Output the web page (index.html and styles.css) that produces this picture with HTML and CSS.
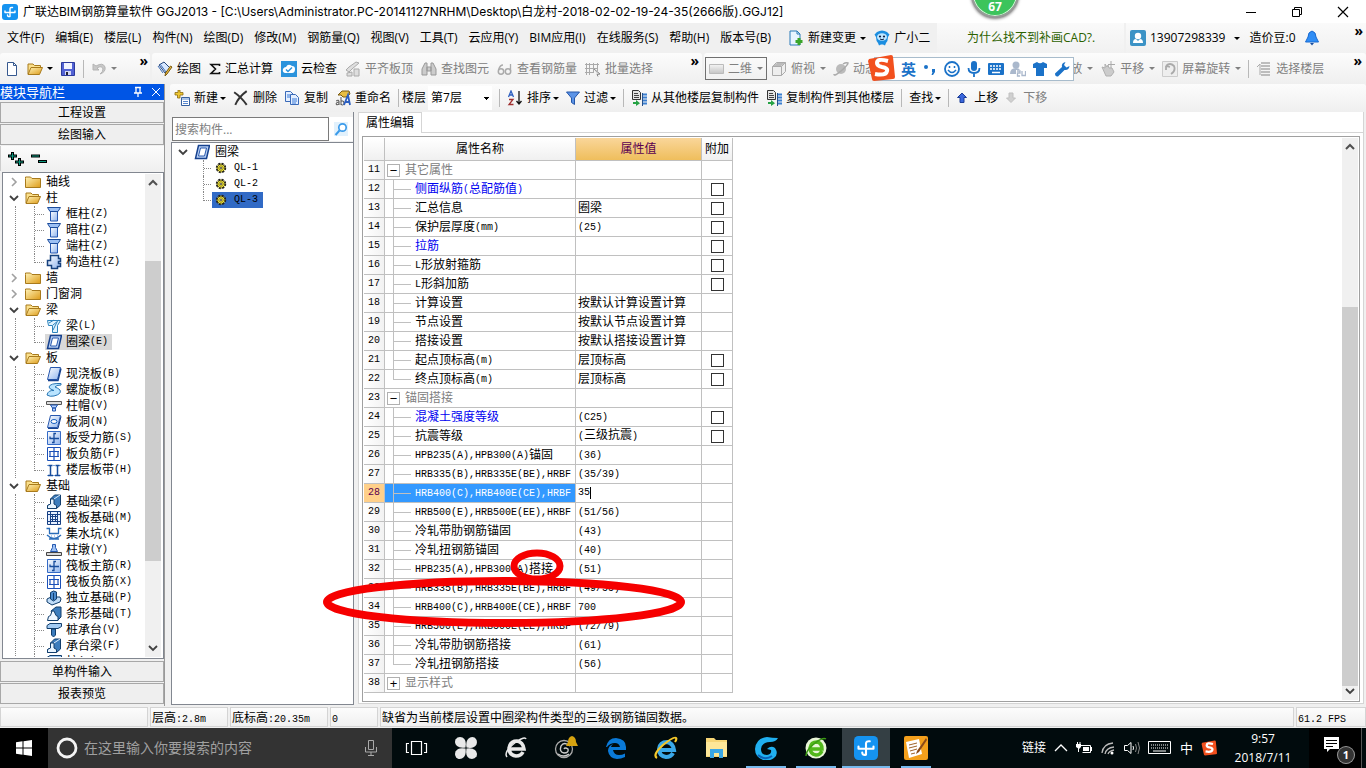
FILE: index.html
```html
<!DOCTYPE html>
<html lang="zh-CN">
<head>
<meta charset="utf-8">
<title>广联达BIM钢筋算量软件 GGJ2013</title>
<link rel="stylesheet" href="styles.css">
</head>
<body>
<svg class="sprite" aria-hidden="true">
  <defs>
    <linearGradient id="gFold" x1="0" y1="0" x2="1" y2="1"><stop offset="0" stop-color="#fff3b8"/><stop offset="1" stop-color="#dd9b18"/></linearGradient>
    <linearGradient id="gBlue" x1="0" y1="0" x2="1" y2="1"><stop offset="0" stop-color="#fff"/><stop offset="1" stop-color="#8fb4ee"/></linearGradient>
    <linearGradient id="gGray" x1="0" y1="0" x2="0" y2="1"><stop offset="0" stop-color="#f4f4f4"/><stop offset="1" stop-color="#c4c4c4"/></linearGradient>
  </defs>
  <symbol id="app" viewBox="0 0 16 16"><rect width="16" height="16" rx="3" fill="#1593f0"/><path d="M8 12.500V5Q8 3.200 10.500 3.500M3 8.500h10M3 7v1.500M13 7v1.500M8 12.500q-2.500.5-2.500-1.500" fill="none" stroke="#fff" stroke-width="1.400" stroke-linecap="round"/></symbol>
  <symbol id="folder" viewBox="0 0 16 16"><path d="M.5 4.500V3h5l1.500 1.500h8.500v9H.5z" fill="url(#gFold)" stroke="#a87a1c"/></symbol>
  <symbol id="folderopen" viewBox="0 0 16 16"><path d="M1 13V3h5l1.500 1.500h6V7" fill="#fbe08c" stroke="#a87a1c"/><path d="M1 13.500L4 6.500h11.500l-3 7z" fill="url(#gFold)" stroke="#a87a1c"/></symbol>
  <symbol id="down" viewBox="0 0 10 10"><path d="M1 3l4 4 4-4" fill="none" stroke="#404040" stroke-width="1.800"/></symbol>
  <symbol id="right" viewBox="0 0 10 10"><path d="M3 1l4 4-4 4" fill="none" stroke="#a0a0a0" stroke-width="1.600"/></symbol>
  <symbol id="up" viewBox="0 0 10 10"><path d="M1 7l4-4 4 4" fill="none" stroke="#505050" stroke-width="2"/></symbol>
  <symbol id="column" viewBox="0 0 16 16"><path d="M4.500 5h7v10h-7z" fill="url(#gBlue)" stroke="#2456b0"/><path d="M1.500 1.500h13l-2.500 4H4z" fill="#9cc0f4" stroke="#1c4c9c"/></symbol>
  <symbol id="gzz" viewBox="0 0 16 16"><path d="M4.500 1.500h8v3h2v3h-2v2h2v3h-3v2h-6v-3h-4v-5h3z" fill="url(#gBlue)" stroke="#16417e" stroke-width="1.500"/></symbol>
  <symbol id="beam" viewBox="0 0 16 16"><path d="M1.500 2.500h13l-3 5v7h-5v-7h-4z" fill="#dff4ff" stroke="#2d83bc"/><path d="M3 5l5-3M7 7l6-5M7 12l4-8" stroke="#2d83bc"/></symbol>
  <symbol id="ring" viewBox="0 0 16 16"><path d="M4.500 1.500h11l-3 13h-11z" fill="#b8d0f4" stroke="#16418e" stroke-width="1.500"/><path d="M6.500 4h6l-2 8h-6z" fill="#fff" stroke="#2858ae"/></symbol>
  <symbol id="slab" viewBox="0 0 16 16"><path d="M4.500 1.500h10l-3 12h-10z" fill="url(#gBlue)" stroke="#2858ae"/><path d="M2 14.500h10l3-12" fill="none" stroke="#16418e" stroke-width="1.400"/></symbol>
  <symbol id="spiral" viewBox="0 0 16 16"><path d="M15 1.500Q4 1 3 5q0 2 5 3.500-6-.5-7 4.500 3 2 7 1 8-2 6-6Q12 6 9 5q1-2 6-2z" fill="#b9e4ff" stroke="#2876b4"/></symbol>
  <symbol id="cap" viewBox="0 0 16 16"><path d="M.5 3.500h15v3H.5z" fill="#ddd" stroke="#555"/><path d="M4.500 7h7L9.500 10H6.500zM6.500 10h3v3h-3z" fill="#b4d0ff" stroke="#2458b0"/></symbol>
  <symbol id="hole" viewBox="0 0 16 16"><path d="M4.500 1.500h10l-3 12h-10z" fill="url(#gBlue)" stroke="#2858ae"/><ellipse cx="8" cy="7.500" rx="3" ry="2" fill="#fff" stroke="#1760c0"/><path d="M2 14.500h10l3-12" fill="none" stroke="#16418e"/></symbol>
  <symbol id="rebar1" viewBox="0 0 16 16"><path d="M1.500 1.500h13v13h-13z" fill="url(#gBlue)" stroke="#356bc6"/><path d="M10 3.500H8v9H6M4 6.500v2h9" fill="none" stroke="#174c9c" stroke-width="1.300"/></symbol>
  <symbol id="rebar2" viewBox="0 0 16 16"><path d="M1.500 1.500h13v13h-13z" fill="#fff" stroke="#1b50b8"/><path d="M8 2v12M3 5.500h10M3 10.500h10M4 5v6M12 5v6" stroke="#1b50b8" stroke-width="1.200"/></symbol>
  <symbol id="band" viewBox="0 0 16 16"><path d="M1 3.500h14M1 13.500h14" stroke="#7aa4dc" stroke-dasharray="2 1"/><path d="M4.500 3v11M11.500 3v11M2.500 3.500h4M9.500 3.500h4M2 13.500h5M9 13.500h5" stroke="#174c9c" stroke-width="1.500"/></symbol>
  <symbol id="found" viewBox="0 0 16 16"><path d="M1.500 14.500v-3l3-1.500V5l4-4h6v10l-4 3.500z" fill="#3c7cbc" stroke="#123e6c"/><path d="M1.500 11.500l3-1.500V5H8v5l2.500 1.500v3h-9z" fill="#e8f4ff" stroke="#123e6c"/><path d="M8 5l6-4" stroke="#e0f0ff"/></symbol>
  <symbol id="raft" viewBox="0 0 16 16"><path d="M1.500 1.500h13v13h-13z" fill="#e6f0ff" stroke="#174084"/><path d="M4.500 2v12M11.500 2v12M2 4.500h12M2 11.500h12M6.500 5v6M9.500 5v6M5 6.500h6M5 9.500h6" stroke="#174084"/></symbol>
  <symbol id="pit" viewBox="0 0 16 16"><path d="M.5 2.500h3v5h9v-5h3M1 9q7 7 14 0M3 13h10" fill="none" stroke="#2a6cb8" stroke-width="1.300"/><path d="M2 10h12M5 13.500h6" stroke="#6098e0" stroke-dasharray="1 2"/></symbol>
  <symbol id="pier" viewBox="0 0 16 16"><path d="M.5 10.500h15v3H.5z" fill="#d8d8d8" stroke="#444"/><path d="M6.500 2.500h3v3l2 4h-7l2-4z" fill="#9cc0f4" stroke="#2458b0"/></symbol>
  <symbol id="iso" viewBox="0 0 16 16"><path d="M1 9l4-2 9 0 1 2-1 3-8 3-5-3z" fill="#bfdcf8" stroke="#123e6c"/><path d="M4.500 2.500l3-1.500 3 1v7l-3 2-3-2zM7.500 3v7" fill="#4c8cd0" stroke="#123e6c"/></symbol>
  <symbol id="strip" viewBox="0 0 16 16"><path d="M10 14.500L5 5l5-4h5v10l-3 3z" fill="#3c7cbc" stroke="#123e6c"/><path d="M1.500 14.500l1-4 2-1L6 5h2l2 4.500 2 1v4z" fill="#eef6ff" stroke="#123e6c"/></symbol>
  <symbol id="pile" viewBox="0 0 16 16"><path d="M1 3.500L4 1.500h11.500v3L12 6.500H1z" fill="#a4ccf4" stroke="#123e6c"/><path d="M5.500 7h4v6l-2 2-2-2z" fill="#3c7cbc" stroke="#123e6c"/></symbol>
  <symbol id="gear" viewBox="0 0 12 12"><circle cx="6" cy="6" r="4.300" fill="#f4e83a" stroke="#222" stroke-width="1.800" stroke-dasharray="2 1.400"/><path d="M6 1v10M1 6h10M2.500 2.500l7 7M9.500 2.500l-7 7" stroke="#4a4410" stroke-width=".7"/><circle cx="6" cy="6" r="2" fill="#f4e83a"/><circle cx="6" cy="6" r="1" fill="#fff" stroke="#222" stroke-width=".8"/></symbol>
  <symbol id="sogou" viewBox="0 0 28 28"><path d="M2 5L24 1q2 0 2 2l2 20q0 2-2 2L7 27q-2 0-2-2L1 7z" fill="#f2501e"/><path d="M21 7q-11-3-11 2 0 3 5 4 6 1 5 4-1 5-12 3" fill="none" stroke="#fff" stroke-width="4"/></symbol>
  <symbol id="copyto" viewBox="0 0 16 16"><path d="M1.500.5h6l2 2v7h-8z" fill="#e4e4e4" stroke="#333"/><path d="M3 3.500h4M3 5.500h5M3 7.500h5" stroke="#444"/><path d="M11 4.500h5M11 7.500h5M11 10.500h5M11 13.500h5" stroke="#3b7fd0" stroke-width="2"/><path d="M11.500 3v13" stroke="#24508c"/><path d="M2 12h3v-2l4 3.200L5 16v-2H2z" fill="#25a244"/></symbol>
</svg>

<header class="titlebar">
  <svg class="i16"><use href="#app"/></svg>
  <h1>广联达BIM钢筋算量软件 GGJ2013 - [C:\Users\Administrator.PC-20141127NRHM\Desktop\白龙村-2018-02-02-19-24-35(2666版).GGJ12]</h1>
  <div class="winbtns">
    <button aria-label="最小化"><svg class="i12" viewBox="0 0 12 12"><path d="M1 6.500h10" stroke="#000"/></svg></button>
    <button aria-label="还原"><svg class="i12" viewBox="0 0 12 12"><path d="M1.500 3.500h7v7h-7zM3.500 3V1.500h7v7H9" fill="none" stroke="#000"/></svg></button>
    <button aria-label="关闭"><svg class="i12" viewBox="0 0 12 12"><path d="M1 1l10 10M11 1L1 11" stroke="#000" stroke-width="1.200"/></svg></button>
  </div>
  <div class="ball">67</div>
</header>

<nav class="menubar">
  <div class="menus">
    <button>文件(F)</button><button>编辑(E)</button><button>楼层(L)</button><button>构件(N)</button><button>绘图(D)</button><button>修改(M)</button><button>钢筋量(Q)</button><button>视图(V)</button><button>工具(T)</button><button>云应用(Y)</button><button>BIM应用(I)</button><button>在线服务(S)</button><button>帮助(H)</button><button>版本号(B)</button>
    <button class="drop change"><svg class="i16" viewBox="0 0 16 16"><path d="M2 1h7l3 3v11H2z" fill="#e8f4ff" stroke="#2a7ab8"/><path d="M9 1v3h3" fill="none" stroke="#2a7ab8"/><path d="M11 8v7M7.500 11.500h7" stroke="#3aa52a" stroke-width="3"/></svg>新建变更</button>
    <button><svg class="i16" viewBox="0 0 16 16"><path d="M3 2q5-3 10 0l2.500 2.500L14 7q0 4-2 6l-1 2.500-2-1H7l-2 1L4 13Q2 11 2 7L.5 4.500z" fill="#1c8ee0"/><ellipse cx="8" cy="7" rx="5" ry="3.800" fill="#bfe6ff"/><circle cx="6" cy="6.500" r="1.100" fill="#124"/><circle cx="10" cy="6.500" r="1.100" fill="#124"/><path d="M6 9q2 1.500 4 0" fill="none" stroke="#124"/></svg>广小二</button>
  </div>
  <a class="tip" href="#">为什么找不到补画CAD?.</a>
  <div class="account">
    <button class="drop"><svg class="i16" viewBox="0 0 16 16"><rect width="16" height="16" rx="2" fill="#3c93c6"/><circle cx="8" cy="6" r="3.200" fill="#fff"/><path d="M3 13q0-4 3-4l2 2 2-2q3 0 3 4z" fill="#fff"/></svg>13907298339</button>
    <button class="bell">造价豆:0<svg class="i16" viewBox="0 0 16 16"><path d="M8 1q4 1 4 6l2.500 5h-13L4 7q0-5 4-6z" fill="#2f8df5" stroke="#1a6ad0"/><path d="M6 13h4l-2 2.500z" fill="#1a4fa0"/></svg></button>
    <span class="more">»</span>
  </div>
</nav>

<div class="toolrow">
  <div class="bar file">
    <button aria-label="新建工程"><svg class="i16" viewBox="0 0 16 16"><path d="M3.500 1.500h6l3 3v10h-9z" fill="#fff" stroke="#37598f"/><path d="M9.500 1.500v3h3" fill="none" stroke="#37598f"/></svg></button>
    <button class="drop" aria-label="打开"><svg class="i16"><use href="#folderopen"/></svg></button>
    <button aria-label="保存"><svg class="i16" viewBox="0 0 16 16"><path d="M1.500 1.500h13v13h-13z" fill="#5262d4" stroke="#2c3a9c"/><path d="M4 2h8v6H4z" fill="#f2f4ff"/><path d="M5 10h6v4H5z" fill="#d4d8f4"/><path d="M6 11h2v3H6z" fill="#223"/></svg></button>
    <i class="sep"></i>
    <button class="drop off" aria-label="撤销"><svg class="i16" viewBox="0 0 16 16"><path d="M2 3v6h6L6 7q5-3 6 1 0 3-3 5 6-2 5-7-2-5-9-1z" fill="#c8c8c8" stroke="#b4b4b4"/></svg></button>
    <span class="more">»</span>
  </div>
  <div class="bar edit">
    <button><svg class="i16" viewBox="0 0 16 16"><path d="M2 4l5-3 6 6-5 5z" fill="#d8e8ff" stroke="#26477c"/><path d="M1 5l5 7M3 3l6 8" stroke="#3d6db8"/><path d="M15 6l-5 7-2 2 .5-3 5-7z" fill="#e8b93e" stroke="#7a5a10"/></svg>绘图</button>
    <button><svg class="i12" viewBox="0 0 12 12"><path d="M10.500 3V1.500H2L6.500 6 2 10.500h8.500V9" fill="none" stroke="#111" stroke-width="1.600"/></svg>汇总计算</button>
    <button><svg class="i16" viewBox="0 0 16 16"><rect width="16" height="16" fill="#2b93dc"/><path d="M4 12q-3-1-2-4 1-2 3-2 2-4 6-1 3 0 3 3 0 4-3 4z" fill="#fff"/><path d="M5 8.500l2 2 4-4" fill="none" stroke="#2b93dc" stroke-width="1.500"/></svg>云检查</button>
    <button class="off"><svg class="i16" viewBox="0 0 16 16"><path d="M1 9l3-3 7-5 3 1-7 6-3 3zM2 15v-3l5-1v4zM9 15V8h5v7z" fill="#dedede" stroke="#aaa"/></svg>平齐板顶</button>
    <button class="off"><svg class="i16" viewBox="0 0 16 16"><path d="M1 14V8l3-6h2v12zM10 14V2h2l3 6v6zM6 6h4v4H6z" fill="#ccc" stroke="#999"/></svg>查找图元</button>
    <button class="off"><svg class="i16" viewBox="0 0 16 16"><circle cx="4" cy="10.500" r="2.700" fill="none" stroke="#aaa" stroke-width="1.500"/><circle cx="11" cy="10.500" r="2.700" fill="none" stroke="#aaa" stroke-width="1.500"/><path d="M1.500 9Q3 4 6 4M13.500 10V3" fill="none" stroke="#aaa" stroke-width="1.300"/></svg>查看钢筋量</button>
    <button class="off"><svg class="i16" viewBox="0 0 16 16"><path d="M1.500 2v12M4.500 2v12M8.500 2v10M12.500 2v8M0 3.500h14M0 7.500h13M0 11.500h8" stroke="#aaa"/><path d="M9 8l6 5-3 .5 1 2" fill="#ddd" stroke="#888"/></svg>批量选择</button>
    <span class="more">»</span>
  </div>
  <div class="bar view">
    <button class="drop off boxed"><svg class="i16" viewBox="0 0 16 16"><path d="M1.500 3.500h14v9h-14z" fill="url(#gGray)" stroke="#bbb"/></svg>二维</button>
    <button class="drop off"><svg class="i16" viewBox="0 0 16 16"><path d="M1.500 5.500l4-4h9v9l-4 4h-9z" fill="#eee" stroke="#aaa"/><path d="M1.500 5.500h9v9M10.500 5.500l4-4" fill="none" stroke="#aaa"/><path d="M2 5l4-3h8l-4 3z" fill="#bbb"/></svg>俯视</button>
    <button class="off"><svg class="i16" viewBox="0 0 16 16"><circle cx="8" cy="8" r="5" fill="#bbb"/><path d="M1 13q0 3 7-3t7-8q-2-1-5 1" fill="none" stroke="#aaa" stroke-width="1.500"/></svg>动态</button>
    <button class="drop off push">缩放</button>
    <button class="drop off"><svg class="i16" viewBox="0 0 16 16"><path d="M2 6l3 1V3l2 3 1-2 1 3h3l2 4-3 4H6z" fill="#ccc" stroke="#b0b0b0"/><path d="M11 0v7M8 3.500h7" stroke="#aaa"/></svg>平移</button>
    <button class="drop off"><svg class="i16" viewBox="0 0 16 16"><path d="M.5.500h15v15H.5z" fill="#eee" stroke="#ccc"/><path d="M4 5q4-4 8 0 2 5-3 8M4 5v4M4 5l4 1" fill="none" stroke="#aaa" stroke-width="1.800"/></svg>屏幕旋转</button>
    <i class="sep"></i>
    <button class="off"><svg class="i16" viewBox="0 0 16 16"><path d="M5 2h9M5 5h9M5 8h9M5 11h9M5 14h9" stroke="#aaa" stroke-width="1.500"/><path d="M1 6l3-3v11" fill="none" stroke="#aaa"/></svg>选择楼层</button>
    <span class="more">»</span>
  </div>
  <div class="ime">
    <svg class="imelogo"><use href="#sogou"/></svg>
    <b>英</b>
    <svg class="i16" viewBox="0 0 16 16"><circle cx="4" cy="6" r="2" fill="#1b72c8"/><path d="M10 8h3v3l-2 3h-1.500l1-3H10z" fill="#1b72c8"/></svg>
    <svg class="i16" viewBox="0 0 16 16"><circle cx="8" cy="8" r="7" fill="none" stroke="#1b72c8" stroke-width="1.800"/><path d="M5.500 5v2M10.500 5v2M4 9q4 5 8 0" fill="none" stroke="#1b72c8" stroke-width="1.500"/></svg>
    <svg class="i16" viewBox="0 0 16 16"><rect x="5" y="0" width="6" height="10" rx="3" fill="#1b72c8"/><path d="M2.500 7q0 5 5.500 5t5.500-5M8 12v4" fill="none" stroke="#1b72c8" stroke-width="1.800"/></svg>
    <svg class="i16" viewBox="0 0 16 16"><rect x="0" y="2" width="16" height="12" rx="1" fill="#1b72c8"/><path d="M2 5h12M2 8h12" stroke="#fff" stroke-width="1.500" stroke-dasharray="2 1"/><path d="M4 11.500h8" stroke="#fff" stroke-width="1.500"/></svg>
    <svg class="i16" viewBox="0 0 16 16"><circle cx="6" cy="4" r="3.500" fill="#aab8cc"/><path d="M0 13q0-6 6-6 3 0 4 2H6v4z" fill="#aab8cc"/><path d="M7 10h3v2H7.500v3H10M12 10v4.500h3.500V10" fill="none" stroke="#aab8cc" stroke-width="1.300"/></svg>
    <svg class="i16" viewBox="0 0 16 16"><path d="M1 3l4-2q3 2.500 6 0l4 2v4h-3v8H4V7H1z" fill="#1b72c8"/></svg>
    <svg class="i16" viewBox="0 0 16 16"><path d="M1 12.500L8 6Q7 2 11.500 1L10 4l2.500 2.500L15.500 5Q15 9.500 10.500 9L4 15.500Q1 16 1 12.500z" fill="#1b72c8"/></svg>
  </div>
</div>

<main class="work">
  <aside class="side">
    <div class="sidehead"><span>模块导航栏</span>
      <svg class="i12" viewBox="0 0 12 12"><path d="M3 1.500h6M4 1v6M8 1v6M2 7h8M6 7v4" stroke="#fff" stroke-width="1.300"/></svg>
      <svg class="i12" viewBox="0 0 12 12"><path d="M2 2l8 8M10 2l-8 8" stroke="#fff"/></svg>
    </div>
    <button class="wide">工程设置</button>
    <button class="wide">绘图输入</button>
    <div class="sidetools">
      <svg class="i16" viewBox="0 0 16 16"><path d="M0 5h9M4.500 1v8M7 11h9M11.500 7v8" stroke="#000" stroke-width="3"/><path d="M1 5h7M4.500 2v6M8 11h7M11.500 8v6" stroke="#0b9a80"/></svg>
      <svg class="i16" viewBox="0 0 16 16"><path d="M0 5h9M7 10.500h9" stroke="#000" stroke-width="3"/><path d="M1 5h7M8 10.500h7" stroke="#0b9a80"/></svg>
    </div>
    <div class="treebox">
      <ul class="tree">
        <li><div class="row"><svg class="chev"><use href="#right"/></svg><svg class="i16"><use href="#folder"/></svg>轴线</div></li>
        <li><div class="row"><svg class="chev"><use href="#down"/></svg><svg class="i16"><use href="#folderopen"/></svg>柱</div>
          <ul>
            <li><span><svg class="i16"><use href="#column"/></svg>框柱<b>(Z)</b></span></li>
            <li><span><svg class="i16"><use href="#column"/></svg>暗柱<b>(Z)</b></span></li>
            <li><span><svg class="i16"><use href="#column"/></svg>端柱<b>(Z)</b></span></li>
            <li><span><svg class="i16"><use href="#gzz"/></svg>构造柱<b>(Z)</b></span></li>
          </ul></li>
        <li><div class="row"><svg class="chev"><use href="#right"/></svg><svg class="i16"><use href="#folder"/></svg>墙</div></li>
        <li><div class="row"><svg class="chev"><use href="#right"/></svg><svg class="i16"><use href="#folder"/></svg>门窗洞</div></li>
        <li><div class="row"><svg class="chev"><use href="#down"/></svg><svg class="i16"><use href="#folderopen"/></svg>梁</div>
          <ul>
            <li><span><svg class="i16"><use href="#beam"/></svg>梁<b>(L)</b></span></li>
            <li><span class="cur"><svg class="i16"><use href="#ring"/></svg>圈梁<b>(E)</b></span></li>
          </ul></li>
        <li><div class="row"><svg class="chev"><use href="#down"/></svg><svg class="i16"><use href="#folderopen"/></svg>板</div>
          <ul>
            <li><span><svg class="i16"><use href="#slab"/></svg>现浇板<b>(B)</b></span></li>
            <li><span><svg class="i16"><use href="#spiral"/></svg>螺旋板<b>(B)</b></span></li>
            <li><span><svg class="i16"><use href="#cap"/></svg>柱帽<b>(V)</b></span></li>
            <li><span><svg class="i16"><use href="#hole"/></svg>板洞<b>(N)</b></span></li>
            <li><span><svg class="i16"><use href="#rebar1"/></svg>板受力筋<b>(S)</b></span></li>
            <li><span><svg class="i16"><use href="#rebar2"/></svg>板负筋<b>(F)</b></span></li>
            <li><span><svg class="i16"><use href="#band"/></svg>楼层板带<b>(H)</b></span></li>
          </ul></li>
        <li><div class="row"><svg class="chev"><use href="#down"/></svg><svg class="i16"><use href="#folderopen"/></svg>基础</div>
          <ul>
            <li><span><svg class="i16"><use href="#found"/></svg>基础梁<b>(F)</b></span></li>
            <li><span><svg class="i16"><use href="#raft"/></svg>筏板基础<b>(M)</b></span></li>
            <li><span><svg class="i16"><use href="#pit"/></svg>集水坑<b>(K)</b></span></li>
            <li><span><svg class="i16"><use href="#pier"/></svg>柱墩<b>(Y)</b></span></li>
            <li><span><svg class="i16"><use href="#rebar1"/></svg>筏板主筋<b>(R)</b></span></li>
            <li><span><svg class="i16"><use href="#rebar2"/></svg>筏板负筋<b>(X)</b></span></li>
            <li><span><svg class="i16"><use href="#iso"/></svg>独立基础<b>(P)</b></span></li>
            <li><span><svg class="i16"><use href="#strip"/></svg>条形基础<b>(T)</b></span></li>
            <li><span><svg class="i16"><use href="#pile"/></svg>桩承台<b>(V)</b></span></li>
            <li><span><svg class="i16"><use href="#found"/></svg>承台梁<b>(F)</b></span></li>
            <li><span><svg class="i16"><use href="#pile"/></svg>桩<b>(U)</b></span></li>
          </ul></li>
      </ul>
      <div class="scroll"><svg class="chev"><use href="#up"/></svg><i class="before"></i><i class="thumb"></i><i class="after"></i><svg class="chev"><use href="#down"/></svg></div>
    </div>
    <button class="wide">单构件输入</button>
    <button class="wide">报表预览</button>
  </aside>

  <section class="right">
    <div class="bar parts">
      <button class="drop"><svg class="i16" viewBox="0 0 16 16"><path d="M4 0h2v2.500h3v2.500H6v3H3.500V5H1V2.500h3z" fill="#f0c832" stroke="#8a6a10" stroke-width=".8"/><path d="M7.500 7.500h8v8h-8z" fill="#fff" stroke="#36609e"/><path d="M8 9h7M9 11.500h5M9 13.500h5" stroke="#5888d0"/></svg>新建</button>
      <button><svg class="i16" viewBox="0 0 14 14"><path d="M1 2q6 4 11 11M12 1Q5 6 2 13" fill="none" stroke="#333" stroke-width="1.700"/></svg>删除</button>
      <button><svg class="i16" viewBox="0 0 16 16"><path d="M1.500 1.500h5l3 3v7h-8z" fill="#e4efff" stroke="#3a6ab8"/><path d="M6.500 4.500h5l3 3v7h-8z" fill="#e4efff" stroke="#3a6ab8"/><path d="M3 5h3M3 7h3M8 9h5M8 11h5M8 13h4" stroke="#3a7ad8"/></svg>复制</button>
      <button><svg class="i16" viewBox="0 0 16 16"><path d="M3 5l4-4h7l1 3-4 3H8L6 5z" fill="#e8bd42" stroke="#7a5a10"/><path d="M1 11q3-2 3 0v4M4 12q-3 0-3 2t3 0M6 7v8M6 11q3-1 3 2t-3 1.500" fill="none" stroke="#555"/><path d="M9 15l4-10 2 10M10.500 12H15" fill="none" stroke="#2c5fc0" stroke-width="1.800"/></svg>重命名</button>
      <i class="sep"></i>
      <label>楼层 <select><option>第7层</option></select></label>
      <i class="sep"></i>
      <button class="drop"><svg class="i16" viewBox="0 0 16 16"><path d="M1.500 7L4 1l2.500 6M2.500 5h3" fill="none" stroke="#2c5fc0" stroke-width="1.300"/><path d="M2 9.500h4l-4 5h4.500" fill="none" stroke="#a03030" stroke-width="1.300"/><path d="M12 1v13M9.500 11l2.500 3 2.500-3" fill="none" stroke="#111" stroke-width="1.300"/></svg>排序</button>
      <button class="drop"><svg class="i14" viewBox="0 0 14 14"><path d="M.5 1h13L8.500 7v6.500l-3-2V7z" fill="#5b93e6" stroke="#2456a8"/></svg>过滤</button>
      <i class="sep"></i>
      <button><svg class="i16"><use href="#copyto"/></svg>从其他楼层复制构件</button>
      <button><svg class="i16"><use href="#copyto"/></svg>复制构件到其他楼层</button>
      <i class="sep"></i>
      <button class="drop">查找</button>
      <i class="sep"></i>
      <button class="arrow"><svg class="i12" viewBox="0 0 12 12"><path d="M6 1l4.500 4.500H8v5H4v-5H1.500z" fill="#3a66dc" stroke="#1b3c96"/></svg>上移</button>
      <button class="arrow off"><svg class="i12" viewBox="0 0 12 12"><path d="M6 10.500L1.500 6H4V1h4v5h2.500z" fill="#d0d0d0" stroke="#c0c0c0"/></svg>下移</button>
    </div>
    <div class="panes">
      <section class="comp">
        <div class="search"><input type="text" placeholder="搜索构件..." aria-label="搜索构件"><button aria-label="搜索"><svg class="i14" viewBox="0 0 14 14"><rect width="14" height="14" fill="#e2f1fc"/><circle cx="8.500" cy="5.500" r="3.700" fill="#fff" stroke="#3b9bea" stroke-width="1.700"/><path d="M5.500 8.500L1.500 13" stroke="#3b9bea" stroke-width="2"/></svg></button></div>
        <div class="complist">
          <ul class="tree">
            <li><div class="row"><svg class="chev"><use href="#down"/></svg><svg class="i16"><use href="#ring"/></svg>圈梁</div>
              <ul>
                <li><span><svg class="i12"><use href="#gear"/></svg><b>QL-1</b></span></li>
                <li><span><svg class="i12"><use href="#gear"/></svg><b>QL-2</b></span></li>
                <li><span class="sel"><svg class="i12"><use href="#gear"/></svg><b>QL-3</b></span></li>
              </ul></li>
          </ul>
        </div>
      </section>
      <section class="props">
        <div class="tabs"><button class="tab">属性编辑</button><i></i></div>
        <div class="gridbox">
          <div class="gridarea">
          <table>
            <colgroup><col class="c1"><col class="c2"><col class="c3"><col class="c4"></colgroup>
            <thead><tr><th></th><th>属性名称</th><th class="hot">属性值</th><th>附加</th></tr></thead>
            <tbody>
              <tr class="grp"><th>11</th><td><button>−</button>其它属性</td><td></td><td></td></tr>
              <tr class="blue"><th>12</th><td><div>侧面纵筋<b>(</b>总配筋值<b>)</b></div></td><td></td><td><input type="checkbox" aria-label="附加 侧面纵筋"></td></tr>
              <tr><th>13</th><td><div>汇总信息</div></td><td>圈梁</td><td><input type="checkbox" aria-label="附加 汇总信息"></td></tr>
              <tr><th>14</th><td><div>保护层厚度<b>(mm)</b></div></td><td><b>(25)</b></td><td><input type="checkbox" aria-label="附加 保护层厚度"></td></tr>
              <tr class="blue"><th>15</th><td><div>拉筋</div></td><td></td><td><input type="checkbox" aria-label="附加 拉筋"></td></tr>
              <tr><th>16</th><td><div><b>L</b>形放射箍筋</div></td><td></td><td><input type="checkbox" aria-label="附加 L形放射箍筋"></td></tr>
              <tr><th>17</th><td><div><b>L</b>形斜加筋</div></td><td></td><td><input type="checkbox" aria-label="附加 L形斜加筋"></td></tr>
              <tr><th>18</th><td><div>计算设置</div></td><td>按默认计算设置计算</td><td></td></tr>
              <tr><th>19</th><td><div>节点设置</div></td><td>按默认节点设置计算</td><td></td></tr>
              <tr><th>20</th><td><div>搭接设置</div></td><td>按默认搭接设置计算</td><td></td></tr>
              <tr><th>21</th><td><div>起点顶标高<b>(m)</b></div></td><td>层顶标高</td><td><input type="checkbox" aria-label="附加 起点顶标高"></td></tr>
              <tr class="end"><th>22</th><td><div>终点顶标高<b>(m)</b></div></td><td>层顶标高</td><td><input type="checkbox" aria-label="附加 终点顶标高"></td></tr>
              <tr class="grp"><th>23</th><td><button>−</button>锚固搭接</td><td></td><td></td></tr>
              <tr class="blue"><th>24</th><td><div>混凝土强度等级</div></td><td><b>(C25)</b></td><td><input type="checkbox" aria-label="附加 混凝土强度等级"></td></tr>
              <tr><th>25</th><td><div>抗震等级</div></td><td><b>(</b>三级抗震<b>)</b></td><td><input type="checkbox" aria-label="附加 抗震等级"></td></tr>
              <tr><th>26</th><td><div><b>HPB235(A),HPB300(A)</b>锚固</div></td><td><b>(36)</b></td><td></td></tr>
              <tr><th>27</th><td><div><b>HRB335(B),HRB335E(BE),HRBF</b></div></td><td><b>(35/39)</b></td><td></td></tr>
              <tr class="active"><th>28</th><td><div><b>HRB400(C),HRB400E(CE),HRBF</b></div></td><td class="editing"><input type="text" value="35" aria-label="HRB400锚固"></td><td></td></tr>
              <tr><th>29</th><td><div><b>HRB500(E),HRB500E(EE),HRBF</b></div></td><td><b>(51/56)</b></td><td></td></tr>
              <tr><th>30</th><td><div>冷轧带肋钢筋锚固</div></td><td><b>(43)</b></td><td></td></tr>
              <tr><th>31</th><td><div>冷轧扭钢筋锚固</div></td><td><b>(40)</b></td><td></td></tr>
              <tr><th>32</th><td><div><b>HPB235(A),HPB300(A)</b>搭接</div></td><td><b>(51)</b></td><td></td></tr>
              <tr><th>33</th><td><div><b>HRB335(B),HRB335E(BE),HRBF</b></div></td><td><b>(49/55)</b></td><td></td></tr>
              <tr><th>34</th><td><div><b>HRB400(C),HRB400E(CE),HRBF</b></div></td><td><b>700</b></td><td></td></tr>
              <tr><th>35</th><td><div><b>HRB500(E),HRB500E(EE),HRBF</b></div></td><td><b>(72/79)</b></td><td></td></tr>
              <tr><th>36</th><td><div>冷轧带肋钢筋搭接</div></td><td><b>(61)</b></td><td></td></tr>
              <tr class="end"><th>37</th><td><div>冷轧扭钢筋搭接</div></td><td><b>(56)</b></td><td></td></tr>
              <tr class="grp"><th>38</th><td><button>+</button>显示样式</td><td></td><td></td></tr>
            </tbody>
          </table>
          <svg class="marks" viewBox="0 0 364 82"><g fill="none" stroke="#f60000"><ellipse cx="182" cy="54" rx="177" ry="21" stroke-width="8"/><ellipse cx="215" cy="18" rx="23" ry="13" stroke-width="7"/></g></svg>
          </div>
          <div class="scroll"><svg class="chev"><use href="#up"/></svg><i class="before"></i><i class="thumb"></i><svg class="chev"><use href="#down"/></svg></div>
        </div>
      </section>
    </div>
  </section>
</main>

<footer class="status">
  <span class="s1"></span><span class="s2">层高<b>:2.8m</b></span><span class="s3">底标高<b>:20.35m</b></span><span class="s4"><b>0</b></span><span class="s5">缺省为当前楼层设置中圈梁构件类型的三级钢筋锚固数据。</span><span class="s6"><b>61.2 FPS</b></span>
</footer>

<div class="taskbar">
  <button class="start" aria-label="开始"><svg class="i16" viewBox="0 0 16 16"><path d="M0 2.200L6.500 1.300v6.200H0zM7.500 1.200L16 0v7.500H7.500zM0 8.500h6.500v6.200L0 13.800zM7.500 8.500H16V16l-8.500-1.200z" fill="#fff"/></svg></button>
  <div class="find">
    <svg class="i22" viewBox="0 0 22 22"><circle cx="11" cy="11" r="9" fill="none" stroke="#f4f4f4" stroke-width="2.800"/></svg>
    <input type="text" placeholder="在这里输入你要搜索的内容" aria-label="搜索">
    <svg class="i16" viewBox="0 0 16 16"><path d="M5.500.500h5v9h-5zM2.500 7v5h11V7M8 12v3M5 15.500h6" fill="none" stroke="#aaa"/></svg>
  </div>
  <div class="apps">
    <button aria-label="任务视图"><svg viewBox="0 0 24 24"><path d="M7.500 5.500h10v13h-10zM5 7.500H2.500v9H5M20 7.500h2.500v9H20" fill="none" stroke="#fff" stroke-width="1.200"/></svg></button>
    <button aria-label="风扇"><svg viewBox="0 0 24 24"><g fill="#e9e9e9"><path id="petal" d="M11.500 11.500Q6 12.500 3 10 0 7 1.500 3.500 4 0 8.500 1.500 13 4 11.500 11.500z"/><use href="#petal" transform="rotate(90 12 12)"/><use href="#petal" transform="rotate(180 12 12)"/><use href="#petal" transform="rotate(270 12 12)"/></g></svg></button>
    <button aria-label="浏览器"><svg viewBox="0 0 24 24"><path d="M19 16q-2 4-7 4-7-1-7-8 1-7 8-7 6 1 7 8H6" fill="none" stroke="#e9e9e9" stroke-width="3.500"/><path d="M3 21Q-1 16 12 6q9-6 10-3" fill="none" stroke="#e9e9e9" stroke-width="1.500"/></svg></button>
    <button aria-label="通知"><svg viewBox="0 0 24 24"><circle cx="10" cy="13" r="8.500" fill="none" stroke="#aaa" stroke-width="1.300"/><path d="M16 10q-6-5-9 0-2 6 3 7 5 0 4-4-3-2-4 0M4 18q6 4 11 0" fill="none" stroke="#ccc" stroke-width="1.400"/><path d="M18 0q4 1 4 6l2 4H12l2-4q0-5 4-6z" fill="#d6a310"/></svg></button>
    <button aria-label="Edge"><svg viewBox="0 0 24 24"><path d="M2 11Q4 2 12 2q10 1 10 9v3H9q1 5 6 5 3 0 6-1.500V21q-4 2-8 2-8-1-9-8 0-5 5-7-2 2-2 3h9q-1-4-5-4-5 0-8 4z" fill="#0a7ad8"/></svg></button>
    <button aria-label="IE"><svg viewBox="0 0 24 24"><path d="M19 17q-2 4-7 4-7-1-7-8 1-7 8-7 6 1 7 8H6" fill="none" stroke="#3aa8e8" stroke-width="4"/><path d="M3 22q-5-3 6-13Q20 0 22 2q1 1-1 4" fill="none" stroke="#f4c82a" stroke-width="2.200"/></svg></button>
    <button aria-label="资源管理器"><svg viewBox="0 0 24 24"><path d="M2 2h8l2 2h11v17H2z" fill="#f6d676"/><path d="M2 6h21v14H2z" fill="#fde798"/><path d="M6 22v-9h13v9h-4v-5h-5v5z" fill="#3aa7e6"/></svg></button>
    <button aria-label="广联达" class="run"><svg viewBox="0 0 24 24"><path d="M24 2q-2 4-8 4-8 0-9 7 0 6 6 6 5-1 4-5l-4-1q4-4 8-1 4 6-1 10-6 4-11 2-8-3-8-11Q2 2 13 1q5 1 11 1z" fill="#20b0f0"/><path d="M4 19q7 6 14 1" fill="none" stroke="#0b62b8" stroke-width="2"/></svg></button>
    <button aria-label="360浏览器" class="run"><svg viewBox="0 0 24 24"><circle cx="12" cy="12" r="10.500" fill="#e9f6d8"/><path d="M18 15q-2 4-6 4-6-1-6-7 1-6 7-6 5 1 5 7H7" fill="none" stroke="#52b81c" stroke-width="3.500"/><path d="M2 20Q2 14 11 7q8-6 11-4" fill="none" stroke="#3c9c14" stroke-width="1.500"/></svg></button>
    <button aria-label="广联达钢筋算量" class="run on"><svg viewBox="0 0 16 16"><use href="#app"/></svg></button>
    <button aria-label="写作" class="run small"><svg viewBox="0 0 24 24"><rect width="24" height="24" rx="2" fill="#f4a01c"/><path d="M2 6l13-3 3 15-13 4z" fill="#fff"/><path d="M5 9l8-2M5 12l8-2M6 15l7-2M7 18l4-1" stroke="#a0642c"/><path d="M22 2l-9 13-1 3 3-2 8-12z" fill="#8c4a18"/></svg></button>
  </div>
  <div class="tray">
    <span>链接</span>
    <svg class="i14" viewBox="0 0 14 14"><path d="M1 10l6-6 6 6" fill="none" stroke="#fff" stroke-width="1.300"/></svg>
    <svg class="i16" viewBox="0 0 16 16"><path d="M4.500 5.500h10v7h-8" fill="none" stroke="#fff"/><path d="M7 7h6v4H7zM15 7h1v4h-1zM0 4h5v3L3 9 0 7zM1 2h1v2H1zM3.500 2h1v2h-1zM2 8h1v4H2z" fill="#fff"/></svg>
    <svg class="i16" viewBox="0 0 16 16"><path d="M2 13Q3 4 13 3M5 14q1-6 9-7M8 14q1-3 6-4" fill="none" stroke="#bbb" stroke-width="1.300"/><circle cx="12" cy="13" r="1.500" fill="#fff"/></svg>
    <svg class="i16" viewBox="0 0 16 16"><path d="M.5 5.500h3L7 2.500v11L3.500 10.500h-3z" fill="none" stroke="#fff"/><path d="M9 6q1 2 0 4" fill="none" stroke="#fff"/><path d="M11.500 4q2 4 0 8M14 2q3 6 0 12" fill="none" stroke="#888"/></svg>
    <svg class="kbd" viewBox="0 0 24 14"><path d="M.5.500h22v12H.500z" fill="none" stroke="#fff"/><path d="M3 4h17M3 7h17" stroke="#fff" stroke-dasharray="1 1"/><path d="M5 10h13" stroke="#fff"/></svg>
    <span class="zh">中</span>
    <svg class="i16"><use href="#sogou"/></svg>
  </div>
  <div class="clock"><span>9:57</span><span>2018/7/11</span></div>
  <button class="note" aria-label="通知中心"><svg viewBox="0 0 24 24"><path d="M1 1h15v12H7l-3 3v-3H1z" fill="#fff"/><path d="M3 4.500h11M3 7.500h11M3 10.500h7" stroke="#000"/></svg><i>1</i></button>
</div>
</body>
</html>
```
FILE: styles.css
```css
* { box-sizing: border-box; }
body {
  margin: 0;
  height: 100vh;
  display: flex;
  flex-direction: column;
  overflow: hidden;
  background: #f0f0f0;
  color: #000;
  font: 12px/16px "Open Sans", "Noto Sans CJK SC", sans-serif;
}
button, input, select { font: inherit; color: inherit; margin: 0; padding: 0; border: 0; background: none; }
button { display: inline-flex; align-items: center; gap: 4px; white-space: nowrap; }
ul { list-style: none; margin: 0; padding: 0; }
svg { display: block; flex: none; }
.sprite { position: absolute; width: 0; height: 0; }
.i12 { width: 12px; height: 12px; }
.i14 { width: 14px; height: 14px; }
.i16 { width: 16px; height: 16px; }
.i22 { width: 22px; height: 22px; }
.chev { width: 10px; height: 10px; }

/* Monospaced Latin inside the Chinese grid text */
.tree b, .props b, .status b, .props tbody th {
  font: 10px/16px "Liberation Mono", monospace;
}

/* Title */
.titlebar { position: relative; flex: none; height: 23px; display: flex; align-items: center; gap: 5px; padding-left: 2px; background: #fff; }
.titlebar h1 { margin: 0; flex: 1; font: 400 12px/16px Inter, "Noto Sans CJK SC", sans-serif; white-space: nowrap; }
.winbtns { display: flex; }
.winbtns button { width: 46px; height: 20px; justify-content: center; }
.ball {
  position: absolute; top: -30px; left: 971px; width: 48px; height: 48px; border-radius: 50%;
  border: 2px solid #999; background: #3cc45c; box-shadow: 0 1px 3px #777, inset 0 0 0 1px #d8f4dc;
  color: #fff; font-weight: 700; text-align: center; padding-top: 27px;
}

/* Menu */
.menubar { flex: none; height: 30px; display: flex; gap: 2px; }
.menus { display: flex; gap: 11px; padding-left: 7px; width: 935px; }
.drop::after { content: ""; border: 3px solid transparent; border-top-color: currentColor; border-bottom: 0; }
.account .drop::after { margin-left: 5px; }
.menus .change { margin: 0 -3px 0 6px; }
.tip { width: 187px; padding-left: 30px; line-height: 30px; color: #2c6200; text-decoration: none; background: linear-gradient(#fafafa, #f1f1f1); }
.account { flex: 1; display: flex; align-items: center; gap: 9px; padding: 0 3px 0 4px; background: linear-gradient(#fafafa, #f1f1f1); }
.bell { gap: 8px; }
.more { margin-left: auto; align-self: flex-start; font-weight: 700; font-size: 14px; }

/* Tool bars */
.toolrow { position: relative; flex: none; height: 31px; display: flex; gap: 2px; }
.bar { display: flex; align-items: center; gap: 7px; background: linear-gradient(#fcfcfc, #efefef); border-radius: 3px; }
.off { color: #808080; }
.sep { width: 1px; height: 18px; background: #b8b8b8; flex: none; }
.file { width: 150px; padding: 0 2px 0 4px; }
.edit { width: 550px; gap: 8px; padding: 0 3px 0 5px; }
.view { flex: 1; padding: 0 4px 0 1px; }
.boxed { height: 23px; border: 1px solid #707070; padding: 0 3px 0 2px; margin-right: -3px; }
.view .drop::after { margin-left: 1px; }
.push { margin-left: auto; }
.view .more { margin-left: 22px; }
.ime {
  position: absolute; left: 874px; top: 4px; width: 200px; height: 24px; display: flex; align-items: center; gap: 6px;
  padding-left: 26px; border: 1px solid #a8bccc; background: #fff;
}
.ime b { color: #1b72c8; font-size: 15px; }
.imelogo { position: absolute; left: -8px; top: -4px; width: 28px; height: 28px; }

/* Work area */
.work { flex: 1; min-height: 0; display: flex; gap: 5px; }
.side { width: 165px; flex: none; display: flex; flex-direction: column; gap: 1px; padding-bottom: 2px; border-right: 1px solid #999; }
.sidehead { height: 16px; flex: none; margin-bottom: 1px; display: flex; align-items: center; gap: 6px; padding-right: 2px; background: #0055e5; color: #fff; }
.sidehead span { flex: 1; font-size: 13px; }
.wide { height: 21px; flex: none; justify-content: center; border: 1px solid #a8a8a8; background: #efefef; }
.sidetools { height: 25px; flex: none; display: flex; align-items: center; gap: 7px; padding-left: 7px; background: linear-gradient(#fcfcfc, #efefef); border-left: 1px solid #ccc; }
.treebox { flex: 1; min-height: 0; margin: 0 0 1px 2px; padding: 1px 2px 1px 1px; display: flex; overflow: hidden; border: 1px solid #828790; background: #fff; }
.treebox .tree { flex: 1; min-width: 0; padding-left: 5px; overflow: hidden; }
.row { display: flex; align-items: center; height: 16px; white-space: nowrap; }
.row .i16 { margin: 0 5px 0 6px; }
.tree ul { margin-left: 6px; padding-left: 18px; border-left: 1px dotted #888; }
.tree ul li { display: flex; height: 16px; white-space: nowrap; }
.tree ul li::before {
  content: ""; width: 10px; height: 16px; border-left: 1px dotted #888;
  background: repeating-linear-gradient(90deg, #888 0 1px, transparent 1px 2px) 0 8px / 100% 1px no-repeat;
}
.tree ul li:last-child::before { height: 9px; }
.tree ul span { display: flex; align-items: center; gap: 4px; padding: 0 4px 0 1px; }
.tree ul b { margin-left: -4px; }
.cur { background: #d9d9d9; }
.scroll { width: 16px; flex: none; display: flex; flex-direction: column; align-items: center; padding: 4px 0; background: #f0f0f0; }
.scroll .thumb { width: 100%; background: #cdcdcd; }
.treebox .before { flex: 73; }
.treebox .thumb { flex: 300; }
.treebox .after { flex: 82; }

.right { flex: 1; min-width: 0; display: flex; flex-direction: column; }
.parts { flex: none; height: 28px; padding-left: 4px; }
.parts .drop::after { margin-left: -2px; }
.parts label { display: flex; align-items: center; gap: 2px; margin-left: -4px; }
.parts select { width: 64px; height: 24px; padding-left: 3px; appearance: none; background: linear-gradient(#000, #000) no-repeat 56px 11px / 5px 1px, linear-gradient(#000, #000) no-repeat 57px 12px / 3px 1px, linear-gradient(#000, #000) no-repeat 58px 13px / 1px 1px, #fff; }
.arrow { gap: 6px; }
.panes { flex: 1; min-height: 0; display: flex; gap: 4px; }
.comp { width: 184px; flex: none; display: flex; flex-direction: column; margin-bottom: 1px; padding-top: 5px; border-right: 1px solid #828790; }
.search { display: flex; height: 25px; padding-left: 2px; }
.search input { width: 157px; height: 24px; border: 1px solid #7a7a7a; background: #fff; color: #707070; padding: 0 2px; }
::placeholder { color: #808080; opacity: 1; }
.search button { width: 25px; height: 24px; justify-content: center; background: #fff; }
.complist { flex: 1; margin-left: 1px; padding: 1px 0 0 6px; background: #fff; border: 1px solid #828790; border-right: 0; }
.complist .tree ul { border-left-color: transparent; }
.complist .tree ul li::before { width: 8px; }
.complist .tree ul span { gap: 7px; padding: 0 5px 0 3px; }
.complist .tree ul b { margin-left: 0; }
.sel { background: #316ac5; }

/* Property grid */
.props { flex: 1; min-width: 0; display: flex; flex-direction: column; margin: 0 2px 2px 0; background: #fff; border: 1px solid #d5d5d5; border-top: 0; }
.tabs { display: flex; height: 21px; }
.tabs i { flex: 1; border-bottom: 1px solid #d5d5d5; }
.tab { width: 63px; justify-content: center; border-top: 1px solid #d5d5d5; border-right: 1px solid #d5d5d5; }
.gridbox { flex: 1; min-height: 0; display: flex; margin: 3px 3px 1px 3px; padding: 1px; border: 1px solid #a0a0a0; }
.gridarea { position: relative; flex: 1; }
table { width: 369px; table-layout: fixed; border-spacing: 0; }
.c1 { width: 21px; } .c2 { width: 191px; } .c3 { width: 126px; } .c4 { width: 31px; }
th, td { padding: 0; border-right: 1px solid #c0c0c0; border-bottom: 1px solid #c0c0c0; font-weight: 400; white-space: nowrap; overflow: hidden; }
thead th { height: 23px; background: linear-gradient(#fff, #f0f0f0); }
thead .hot { color: #5a0050; background: linear-gradient(#fad69a, #efbe5c); }
tbody th, tbody td { height: 19px; }
tbody th { background: linear-gradient(90deg, #fff, #f2f2f2); }
td:nth-child(3) { padding-left: 2px; }
td:nth-child(4) { text-align: center; }
td div { display: flex; align-items: center; height: 18px; margin-left: 8px; }
td div::before {
  content: ""; width: 17px; height: 18px; margin-right: 4px; border-left: 1px solid #c0c0c0;
  background: linear-gradient(#c0c0c0, #c0c0c0) 0 9px / 100% 1px no-repeat;
}
td div b { padding-top: 1px; }
.end div::before { height: 10px; align-self: flex-start; }
.blue td { color: #0000f0; }
.blue td:nth-child(3) { color: #000; }
.grp td { color: #808080; }
.grp button { width: 13px; height: 13px; margin: 0 5px 0 2px; justify-content: center; border: 1px solid #b0b0b0; color: #000; font: 13px/11px "Liberation Sans", sans-serif; vertical-align: middle; }
.active th { background: #ffd08a; color: #5a0050; }
.active td:nth-child(2) { background: #3399ff; color: #fff; }
.editing input { width: 12px; height: 16px; font: 10px/16px "Liberation Mono", monospace; border: 0; vertical-align: middle; }
.editing::after { content: ""; display: inline-block; width: 1px; height: 12px; background: #000; vertical-align: middle; }
td input[type="checkbox"] { appearance: none; width: 13px; height: 13px; border: 1px solid #333; background: #fff; vertical-align: middle; }
.marks { position: absolute; left: -42px; top: 410px; width: 364px; height: 82px; }
.gridbox .before { flex: 153; }
.gridbox .thumb { flex: 375; }

/* Status line */
.status { flex: none; height: 22px; display: flex; gap: 2px; padding-top: 1px; }
.status span { display: block; height: 20px; padding-left: 1px; line-height: 20px; border: 1px solid #d4d4d4; background: linear-gradient(#fcfcfc, #f0f0f0); white-space: nowrap; overflow: hidden; }
.s1 { width: 148px; } .s2 { width: 78px; } .s3 { width: 98px; } .s4 { width: 48px; } .s5 { flex: 1; } .s6 { width: 70px; }

/* Task bar */
.taskbar { flex: none; height: 40px; display: flex; background: #010b0d; color: #fff; }
.start { width: 48px; justify-content: center; background: #000; }
.find { width: 344px; display: flex; align-items: center; gap: 6px; padding: 0 13px 0 8px; background: #333; }
.find input { flex: 1; min-width: 0; font-size: 14px; }
.find ::placeholder { color: #a0a0a0; }
.apps { flex: 1; display: flex; gap: 2px; }
.apps button { width: 48px; justify-content: center; border-bottom: 2px solid transparent; border-top: 2px solid transparent; }
.apps svg { width: 24px; height: 24px; }
.apps .run { background: linear-gradient(#76b9ed, #76b9ed) center bottom / 40px 2px no-repeat border-box; }
.apps .on { background: linear-gradient(#76b9ed, #76b9ed) center bottom / 48px 2px no-repeat border-box, #343f44 border-box; }
.apps .small { background-size: 30px 2px; }
.tray { display: flex; align-items: center; gap: 8px; }
.kbd { width: 24px; height: 14px; }
.zh { font-size: 13px; }
.clock { display: flex; flex-direction: column; justify-content: center; gap: 3px; width: 92px; text-align: center; }
.note { position: relative; width: 53px; justify-content: center; background: #000; border-right: 1px solid #555; margin-right: 4px; }
.note svg { width: 24px; height: 24px; }
.note i { position: absolute; left: 29px; top: 19px; width: 16px; height: 16px; border-radius: 50%; background: #333; box-shadow: 0 0 0 1px #999; font: 700 11px/16px "Open Sans", sans-serif; text-align: center; }
```
